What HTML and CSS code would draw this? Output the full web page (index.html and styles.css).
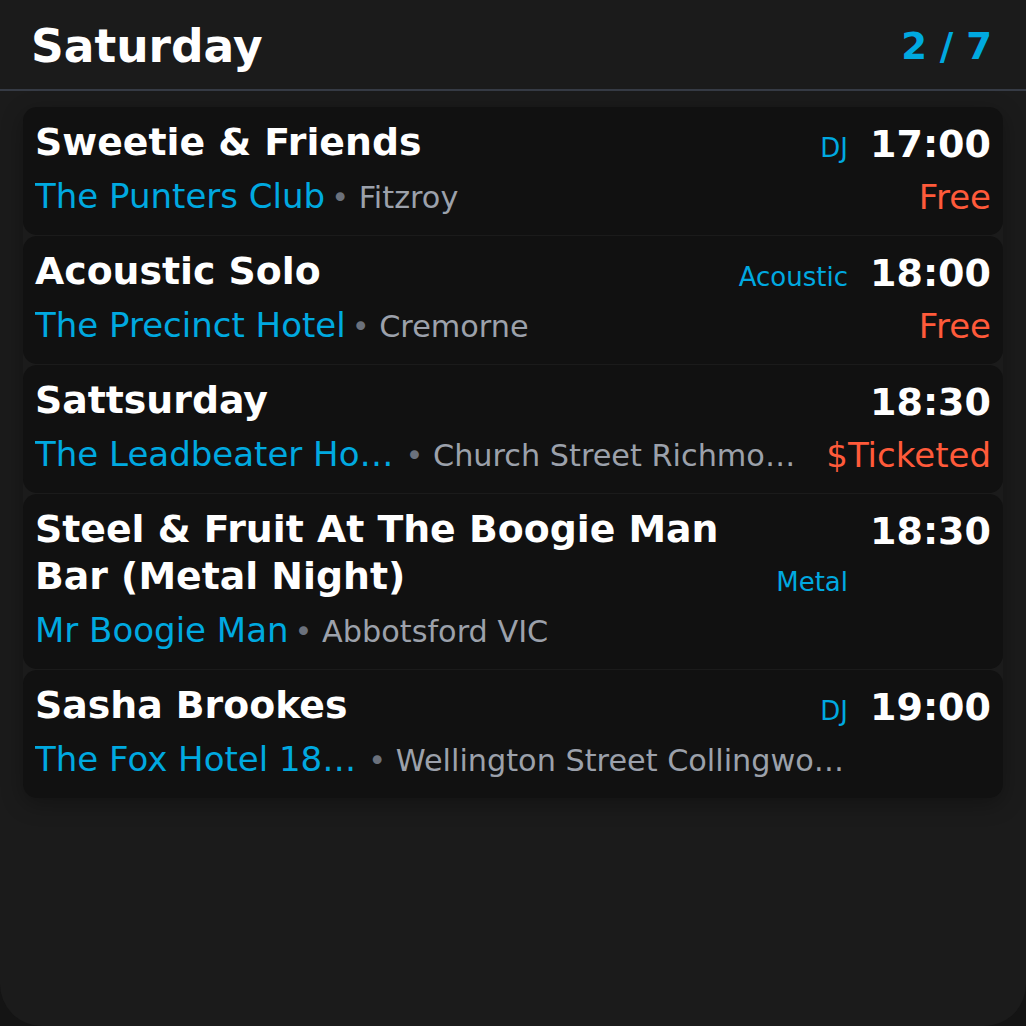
FILE: index.html
```html
<!DOCTYPE html>
<html lang="en">
<head>
<meta charset="utf-8">
<title>Saturday</title>
<link rel="stylesheet" href="styles.css">
</head>
<body>
<div class="app">
  <header class="header">
    <h1 class="day">Saturday</h1>
    <div class="counter">2 / 7</div>
  </header>
  <main class="list">
    <article class="card">
      <div class="main">
        <div class="top">
          <div class="title">Sweetie &amp; Friends</div>
          <div class="tag">DJ</div>
        </div>
        <div class="meta"><span class="venue">The Punters Club</span><span class="suburb"><span class="dot">•</span> Fitzroy</span></div>
      </div>
      <div class="side">
        <div class="time">17:00</div>
        <div class="price">Free</div>
      </div>
    </article>
    <article class="card">
      <div class="main">
        <div class="top">
          <div class="title">Acoustic Solo</div>
          <div class="tag">Acoustic</div>
        </div>
        <div class="meta"><span class="venue">The Precinct Hotel</span><span class="suburb"><span class="dot">•</span> Cremorne</span></div>
      </div>
      <div class="side">
        <div class="time">18:00</div>
        <div class="price">Free</div>
      </div>
    </article>
    <article class="card">
      <div class="main">
        <div class="top">
          <div class="title">Sattsurday</div>
        </div>
        <div class="meta"><span class="venue clipped">The Leadbeater Ho…</span><span class="suburb"><span class="dot">•</span> Church Street Richmo…</span></div>
      </div>
      <div class="side">
        <div class="time">18:30</div>
        <div class="price">$Ticketed</div>
      </div>
    </article>
    <article class="card">
      <div class="main">
        <div class="top">
          <div class="title">Steel &amp; Fruit At The Boogie Man Bar (Metal Night)</div>
          <div class="tag">Metal</div>
        </div>
        <div class="meta"><span class="venue">Mr Boogie Man</span><span class="suburb"><span class="dot">•</span> Abbotsford VIC</span></div>
      </div>
      <div class="side">
        <div class="time">18:30</div>
      </div>
    </article>
    <article class="card">
      <div class="main">
        <div class="top">
          <div class="title">Sasha Brookes</div>
          <div class="tag">DJ</div>
        </div>
        <div class="meta"><span class="venue clipped">The Fox Hotel 18…</span><span class="suburb"><span class="dot">•</span> Wellington Street Collingwo…</span></div>
      </div>
      <div class="side">
        <div class="time">19:00</div>
      </div>
    </article>
  </main>
</div>
</body>
</html>
```
FILE: styles.css
```css
html, body {
  margin: 0;
  padding: 0;
  background: #141414;
}
body {
  font-family: "DejaVu Sans", "Liberation Sans", sans-serif;
  color: #ffffff;
}
.app {
  width: 1026px;
  height: 1026px;
  background: #1b1b1b;
  border-radius: 0 0 42px 42px;
  overflow: hidden;
}
.header {
  height: 85px;
  display: flex;
  align-items: center;
  justify-content: space-between;
  padding: 4px 34px 0 31px;
  border-bottom: 2px solid #363b45;
}
.day {
  margin: 0;
  font-size: 45.5px;
  font-weight: bold;
  line-height: 54px;
  color: #ffffff;
}
.counter {
  font-size: 37px;
  font-weight: bold;
  color: #00a9e0;
}
.list {
  margin: 16px 23px 0;
  display: flex;
  flex-direction: column;
  gap: 1px;
  border-radius: 14px;
  box-shadow: 0 6px 22px rgba(0, 0, 0, 0.3);
}
.card {
  display: flex;
  gap: 22px;
  padding: 12px 12px 17px;
  background: #111111;
  border-radius: 14px;
}
.main {
  flex: 1;
  min-width: 0;
}
.top {
  display: flex;
  align-items: flex-end;
  gap: 16px;
}
.title {
  flex: 1;
  font-size: 37.8px;
  font-weight: bold;
  line-height: 47px;
  color: #ffffff;
}
.tag {
  font-size: 26px;
  line-height: 35px;
  color: #00a9e0;
  white-space: nowrap;
}
.meta {
  display: flex;
  align-items: baseline;
  margin-top: 10px;
  font-size: 34px;
  line-height: 40px;
  white-space: nowrap;
}
.venue {
  color: #00a9e0;
  overflow: hidden;
  text-overflow: ellipsis;
}
.venue.clipped {
  padding-right: 6px;
}
.suburb {
  margin-left: 6px;
  font-size: 30.3px;
  color: #9ca1ab;
  overflow: hidden;
  text-overflow: ellipsis;
}
.dot {
  color: #6b717c;
}
.side {
  padding-top: 2px;
  text-align: right;
  white-space: nowrap;
}
.time {
  font-size: 38px;
  font-weight: bold;
  line-height: 47px;
  color: #ffffff;
}
.price {
  margin-top: 9px;
  font-size: 34px;
  line-height: 40px;
  color: #ff5a3a;
}
```
